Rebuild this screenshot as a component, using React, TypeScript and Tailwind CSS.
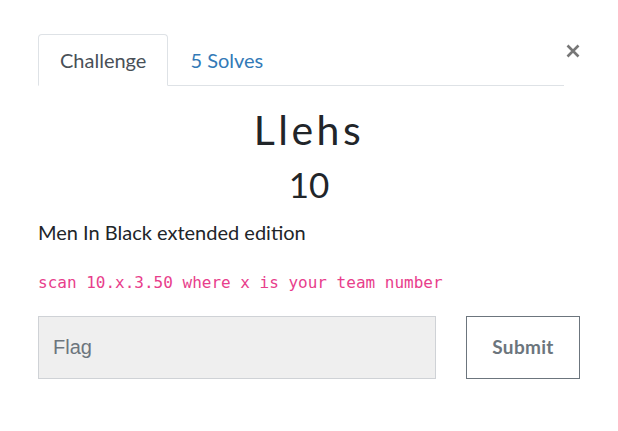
import { useState } from 'react';

const tabs = [
    { id: 'challenge', label: 'Challenge' },
    { id: 'solves', label: '5 Solves' },
];

const App = () => {
    const [activeTab, setActiveTab] = useState('challenge');
    const [flag, setFlag] = useState('');

    return (
        <div
            className="w-[618px] h-[431px] bg-white pt-[34px] pl-[38px] pr-[38px]"
            style={{ fontFamily: 'Lato, "Noto Sans", sans-serif' }}
        >
            {/* Header: tabs + close */}
            <div className="flex items-start justify-between">
                <div className="flex w-[526px] border-b border-[#dee2e6]">
                    {tabs.map((tab) => (
                        <button
                            key={tab.id}
                            onClick={() => setActiveTab(tab.id)}
                            className={`h-[52px] px-[21px] -mb-px text-[20px] leading-none rounded-t-[4px] border ${
                                activeTab === tab.id
                                    ? 'text-[#495057] bg-white border-[#dee2e6] border-b-white'
                                    : 'text-[#337ab7] border-transparent'
                            }`}
                        >
                            {tab.label}
                        </button>
                    ))}
                </div>
                <button className="mt-[10px] w-[14px] h-[14px] text-[#777]" aria-label="Close">
                    <svg className="w-[14px] h-[14px]" viewBox="0 0 14 14" fill="none" stroke="currentColor">
                        <path strokeWidth={2.6} d="M1.5 1.5l11 11M12.5 1.5l-11 11" />
                    </svg>
                </button>
            </div>

            {/* Challenge body */}
            <div className="text-center text-[#212529]">
                <h3 className="mt-[20px] text-[41px] leading-[48px] tracking-[3.5px]">Llehs</h3>
                <h4 className="mt-[10px] text-[35px] leading-[40px]">10</h4>
            </div>

            <p className="mt-[14px] text-[20px] leading-[28px] text-[#212529]">Men In Black extended edition</p>

            <p className="mt-[24px]">
                <code
                    className="text-[16px] leading-[24px] text-[#e83e8c]"
                    style={{ fontFamily: '"DejaVu Sans Mono", monospace' }}
                >
                    scan 10.x.3.50 where x is your team number
                </code>
            </p>

            {/* Flag form */}
            <div className="mt-[21px] flex gap-[30px]">
                <input
                    value={flag}
                    onChange={(e) => setFlag(e.target.value)}
                    placeholder="Flag"
                    className="w-[398px] h-[63px] px-[14px] bg-[#efefef] border border-[#cfd2d6] text-[20px] text-[#495057] placeholder:text-[#6c757d] outline-none"
                    style={{ fontFamily: '"Liberation Sans", Arial, sans-serif' }}
                />
                <button className="w-[114px] h-[63px] border border-[#6c757d] text-[19px] font-bold text-[#6c757d] tracking-[0.3px]">
                    Submit
                </button>
            </div>
        </div>
    );
};

export default App;
